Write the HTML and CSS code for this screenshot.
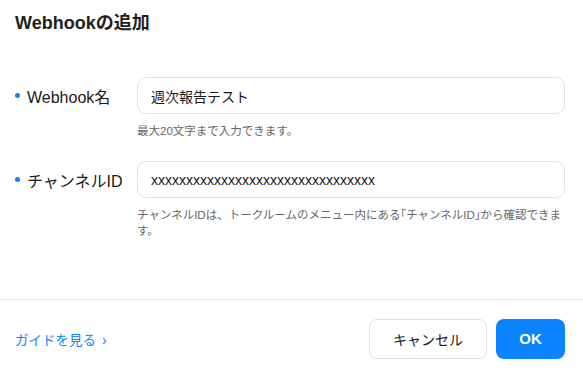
FILE: index.html
```html
<!DOCTYPE html>
<html lang="ja">
<head>
    <meta charset="UTF-8">
    <meta name="viewport" content="width=device-width, initial-scale=1.0">
    <title>Webhookの追加</title>
    <link rel="stylesheet" href="styles.css">
</head>
<body>
    <div class="dialog">
        <header class="dialog-header">
            <h1>Webhookの追加</h1>
        </header>

        <main class="dialog-body">
            <div class="field">
                <label class="field-label" for="wh-name">Webhook名</label>
                <div class="field-control">
                    <input id="wh-name" class="text-input" type="text" value="週次報告テスト">
                    <p class="hint">最大20文字まで入力できます。</p>
                </div>
            </div>

            <div class="field">
                <label class="field-label" for="wh-channel">チャンネルID</label>
                <div class="field-control">
                    <input id="wh-channel" class="text-input" type="text" value="xxxxxxxxxxxxxxxxxxxxxxxxxxxxxxxx">
                    <p class="hint">チャンネルIDは、トークルームのメニュー内にある｢チャンネルID｣から確認できます。</p>
                </div>
            </div>
        </main>

        <footer class="dialog-footer">
            <a class="guide-link" href="#">ガイドを見る<span class="chevron">›</span></a>
            <div class="actions">
                <button class="btn btn-cancel">キャンセル</button>
                <button class="btn btn-ok">OK</button>
            </div>
        </footer>
    </div>
</body>
</html>
```

FILE: styles.css
```css
/* Base */
* {
    box-sizing: border-box;
}

body {
    margin: 0;
    font-family: "Liberation Sans", "Noto Sans CJK JP", sans-serif;
    color: #1a1a1a;
    background-color: #ffffff;
}

.dialog {
    display: flex;
    flex-direction: column;
    width: 583px;
    height: 377px;
}

/* Header */
.dialog-header {
    padding: 12px 15px 0;
}

.dialog-header h1 {
    margin: 0;
    font-size: 18px;
    line-height: 22px;
    font-weight: bold;
    color: #1e1e1e;
}

/* Form */
.dialog-body {
    flex: 1;
    display: flex;
    flex-direction: column;
    gap: 22px;
    padding: 43px 18px 0 15px;
}

.field {
    display: grid;
    grid-template-columns: 122px 1fr;
}

.field-label {
    display: flex;
    align-items: center;
    height: 37px;
    font-size: 16px;
    color: #1a1a1a;
}

.field-label::before {
    content: "";
    width: 5px;
    height: 5px;
    margin-right: 7px;
    border-radius: 50%;
    background-color: #0a84ff;
}

.text-input {
    display: block;
    width: 100%;
    height: 37px;
    padding: 0 13px;
    border: 1px solid #e2e2e2;
    border-radius: 9px;
    font-family: inherit;
    font-size: 14px;
    color: #1a1a1a;
    outline: none;
}

.hint {
    margin: 9px 0 0;
    font-size: 11.5px;
    line-height: 16px;
    color: #666666;
}

/* Footer */
.dialog-footer {
    display: flex;
    align-items: center;
    justify-content: space-between;
    height: 78px;
    padding: 0 18px 0 15px;
    border-top: 1px solid #e4e4e4;
}

.guide-link {
    font-size: 13.5px;
    color: #0a84ff;
    text-decoration: none;
}

.chevron {
    margin-left: 6px;
    font-size: 14px;
}

.actions {
    display: flex;
    gap: 9px;
}

.btn {
    height: 40px;
    border-radius: 8px;
    font-family: inherit;
    font-size: 14px;
    cursor: pointer;
}

.btn-cancel {
    width: 118px;
    background-color: #ffffff;
    border: 1px solid #e0e0e0;
    color: #1a1a1a;
}

.btn-ok {
    width: 69px;
    background-color: #0a84ff;
    border: none;
    color: #ffffff;
    font-weight: bold;
    font-size: 15px;
}
```
